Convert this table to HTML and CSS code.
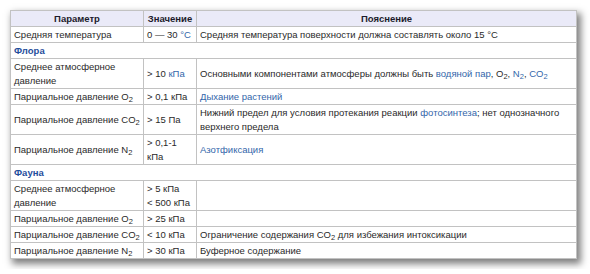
FILE: index.html
```html
<!DOCTYPE html>
<html lang="ru">
<head>
<meta charset="utf-8">
<link rel="stylesheet" href="styles.css">
</head>
<body>
<table class="wikitable">
  <colgroup>
    <col class="c1"><col class="c2"><col class="c3">
  </colgroup>
  <thead>
    <tr><th>Параметр</th><th>Значение</th><th>Пояснение</th></tr>
  </thead>
  <tbody>
    <tr><td>Средняя температура</td><td>0 — 30 <a>°C</a></td><td>Средняя температура поверхности должна составлять около 15 °C</td></tr>
    <tr class="section"><td colspan="3">Флора</td></tr>
    <tr><td>Среднее атмосферное давление</td><td>&gt; 10 <a>кПа</a></td><td>Основными компонентами атмосферы должны быть <a>водяной пар</a>, O<sub>2</sub>, <a>N<sub>2</sub></a>, <a>CO<sub>2</sub></a></td></tr>
    <tr><td>Парциальное давление O<sub>2</sub></td><td>&gt; 0,1 кПа</td><td><a>Дыхание растений</a></td></tr>
    <tr><td>Парциальное давление CO<sub>2</sub></td><td>&gt; 15 Па</td><td>Нижний предел для условия протекания реакции <a>фотосинтеза</a>; нет однозначного верхнего предела</td></tr>
    <tr><td>Парциальное давление N<sub>2</sub></td><td>&gt; 0,1-1 кПа</td><td><a>Азотфиксация</a></td></tr>
    <tr class="section"><td colspan="3">Фауна</td></tr>
    <tr><td>Среднее атмосферное давление</td><td>&gt; 5 кПа<br>&lt; 500 кПа</td><td></td></tr>
    <tr><td>Парциальное давление O<sub>2</sub></td><td>&gt; 25 кПа</td><td></td></tr>
    <tr><td>Парциальное давление CO<sub>2</sub></td><td>&lt; 10 кПа</td><td>Ограничение содержания CO<sub>2</sub> для избежания интоксикации</td></tr>
    <tr><td>Парциальное давление N<sub>2</sub></td><td>&gt; 30 кПа</td><td>Буферное содержание</td></tr>
  </tbody>
</table>
</body>
</html>
```
FILE: styles.css
```css
html, body {
  margin: 0;
  background: #ffffff;
}
body {
  padding: 10px;
  font-family: "Liberation Sans", Arial, sans-serif;
  font-size: 9.5px;
  color: #2a2a2a;
}
.wikitable {
  border-collapse: collapse;
  table-layout: fixed;
  width: 567px;
  border: 1px solid #a4a4a4;
  background: #fff;
  box-shadow: 3px 4px 7px 1px rgba(0, 0, 0, 0.5);
}
.c1 { width: 133px; }
.c2 { width: 53px; }
.c3 { width: auto; }
.wikitable th,
.wikitable td {
  border: 1px solid #c2c2c2;
  padding: 1px 3px 0;
  line-height: 14px;
  vertical-align: middle;
  text-align: left;
}
.wikitable th {
  background: #eaeaf8;
  text-align: center;
  font-weight: bold;
  color: #1c1c2c;
}
.section td {
  font-weight: bold;
  color: #1f4e9c;
}
a {
  color: #3366aa;
}
sub {
  font-size: 7.5px;
  line-height: 0;
  vertical-align: -2px;
}
```
